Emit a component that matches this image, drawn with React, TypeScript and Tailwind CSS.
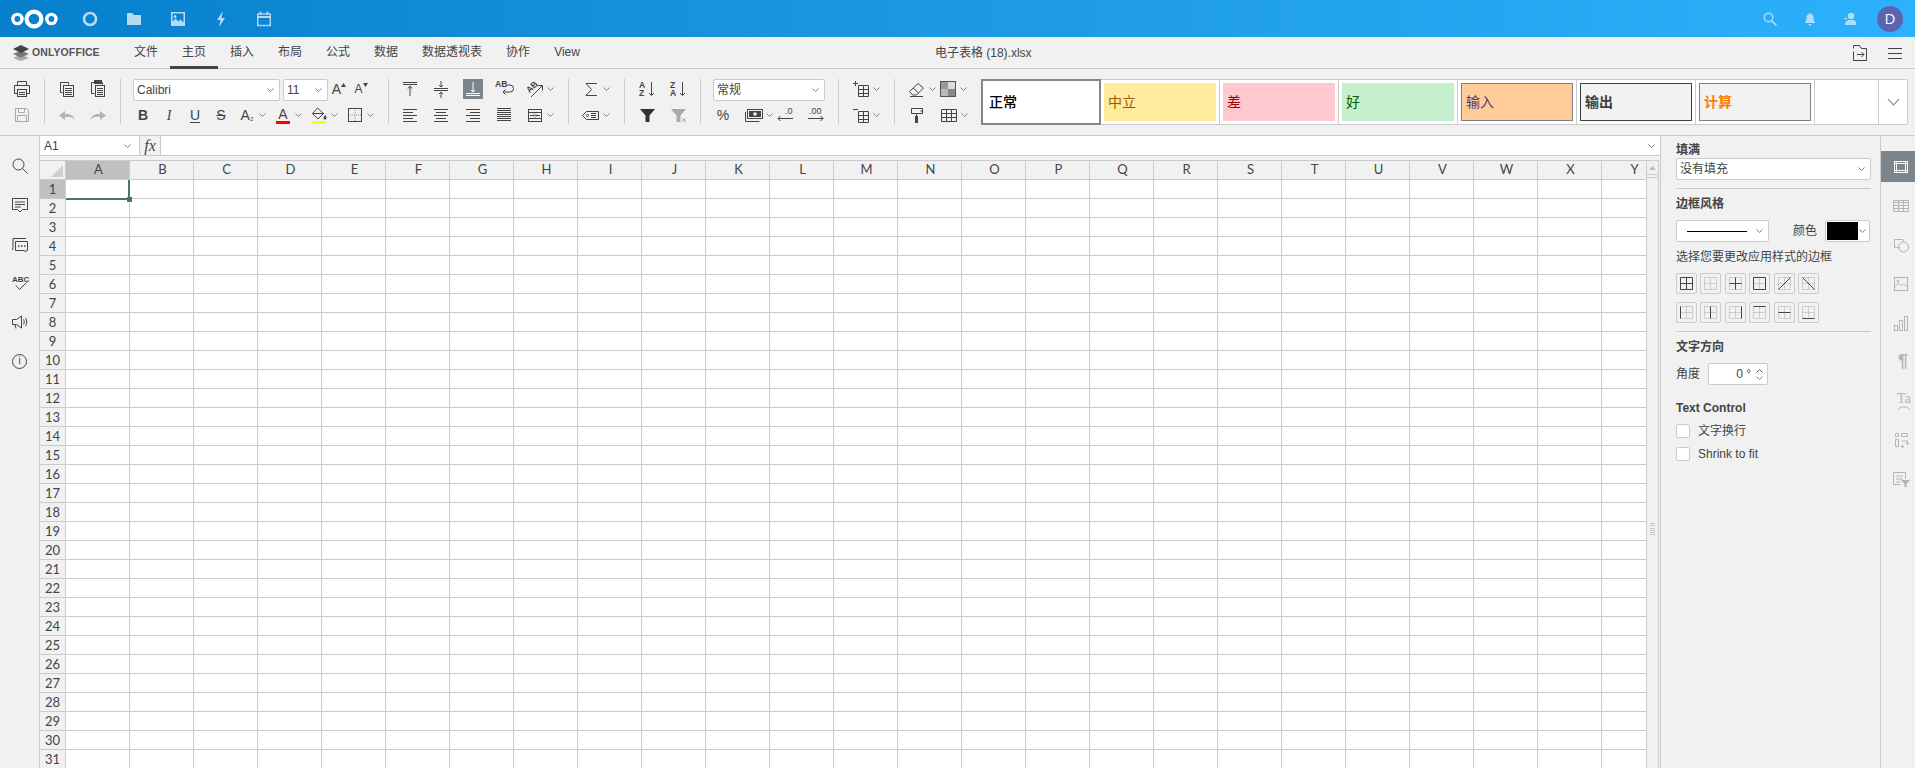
import React from 'react';

const COLUMNS = 'ABCDEFGHIJKLMNOPQRSTUVWXY'.split('');
const ROWS = Array.from({ length: 31 }, (_, i) => i + 1);

type IconProps = { children: React.ReactNode; size?: number; className?: string };

const Svg: React.FC<IconProps> = ({ children, size = 20, className }) => (
  <svg width={size} height={size} viewBox="0 0 20 20" fill="none" stroke="currentColor" strokeWidth="1" className={className}>
    {children}
  </svg>
);

const Chevron = () => (
  <svg width="7" height="4" viewBox="0 0 7 4" fill="none" stroke="#808080" strokeWidth="1" className="shrink-0">
    <path d="M.5.5 3.500 3.500 6.500.5" />
  </svg>
);

const Tool: React.FC<{ children?: React.ReactNode; className?: string }> = ({ children, className = '' }) => (
  <div className={`w-[20px] h-[20px] shrink-0 flex items-center justify-center ${className}`}>{children}</div>
);

const Split: React.FC<{ children?: React.ReactNode }> = ({ children }) => (
  <div className="w-[30px] h-[20px] shrink-0 flex items-center">
    <Tool>{children}</Tool>
    <div className="w-[10px] flex justify-center">
      <Chevron />
    </div>
  </div>
);

const Combo: React.FC<{ children?: React.ReactNode; className?: string }> = ({ children, className = '' }) => (
  <div className={`h-[22px] shrink-0 flex items-center justify-between bg-white border border-[#cbcbcb] rounded-[2px] pl-[3px] pr-[5px] ${className}`}>
    <span className="truncate">{children}</span>
    <Chevron />
  </div>
);

const Sep = () => <div className="w-px h-[45px] bg-[#cbcbcb] shrink-0" />;

const Row: React.FC<{ children?: React.ReactNode; className?: string }> = ({ children, className = '' }) => (
  <div className={`h-[20px] flex items-start ${className}`}>{children}</div>
);

function TopBar() {
  return (
    <header className="h-[37px] shrink-0 flex items-center bg-linear-to-r from-[#0680cc] to-[#2db1fc] pl-[11px] pr-[12px] text-white">
      <svg width="47" height="22" viewBox="0 0 47 22" fill="none" stroke="#fff">
        <circle cx="23" cy="11" r="7.400" strokeWidth="4.200" />
        <circle cx="6.400" cy="11" r="4.600" strokeWidth="3.400" />
        <circle cx="40.400" cy="11" r="4.600" strokeWidth="3.400" />
      </svg>
      <div className="flex ml-[10px] opacity-70">
        <div className="w-[44px] flex justify-center">
          <svg width="16" height="16" viewBox="0 0 16 16" fill="none" stroke="#fff" strokeWidth="2.600"><circle cx="8" cy="8" r="6" /></svg>
        </div>
        <div className="w-[44px] flex justify-center">
          <svg width="16" height="16" viewBox="0 0 16 16" fill="#fff"><path d="M1 2h5l2 2h7v10H1z" /></svg>
        </div>
        <div className="w-[43px] flex justify-center">
          <svg width="16" height="16" viewBox="0 0 16 16" fill="#fff"><path fillRule="evenodd" d="M1 1h14v14H1zm1.500 1.500v8l3-3 3 3 2-2 3 3v-9zM5 4a1.500 1.500 0 110 3 1.500 1.500 0 010-3z" /></svg>
        </div>
        <div className="w-[43px] flex justify-center">
          <svg width="16" height="16" viewBox="0 0 16 16" fill="#fff"><path d="M10 0 4 9h3.500L6 16l6-9H8.500z" /></svg>
        </div>
        <div className="w-[43px] flex justify-center">
          <svg width="16" height="16" viewBox="0 0 16 16" fill="none" stroke="#fff" strokeWidth="1.400"><rect x="1.700" y="3" width="12.600" height="11.500" /><path d="M1.700 6h12.600" strokeWidth="2" /><path d="M4.500.5v3M11.500.5v3" strokeWidth="1.800" /></svg>
        </div>
      </div>
      <div className="ml-auto flex items-center">
        <div className="w-[40px] flex justify-center opacity-60">
          <svg width="14" height="14" viewBox="0 0 14 14" fill="none" stroke="#fff" strokeWidth="1.400"><circle cx="5.500" cy="5.500" r="4.300" /><path d="m8.800 8.800 4.500 4.500" strokeWidth="1.800" /></svg>
        </div>
        <div className="w-[40px] flex justify-center opacity-60">
          <svg width="12" height="14" viewBox="0 0 12 14" fill="#fff"><path d="M6 1a1 1 0 011 1c2 .5 2.500 2 2.500 4 0 2 .5 3 1.500 4v1H1v-1c1-1 1.500-2 1.500-4 0-2 .5-3.500 2.500-4a1 1 0 011-1zM4.500 12h3a1.500 1.500 0 01-3 0z" /></svg>
        </div>
        <div className="w-[40px] flex justify-center opacity-60">
          <svg width="14" height="14" viewBox="0 0 14 14" fill="#fff"><circle cx="8" cy="4" r="3.300" /><path d="M2 13v-1.500c0-2 2-3 3.500-3.500h5c1.500.5 2.500 1.500 2.500 3V13z" /><rect x="1" y="6" width="3" height="1.200" /></svg>
        </div>
        <div className="w-[26px] h-[26px] rounded-full bg-[#5b64b0] flex items-center justify-center text-[15px] ml-[7px] font-['Open_Sans',sans-serif]">D</div>
      </div>
    </header>
  );
}

function MenuBar() {
  const tabs = ['文件', '主页', '插入', '布局', '公式', '数据', '数据透视表', '协作', 'View'];
  return (
    <div className="h-[32px] shrink-0 flex items-stretch border-b border-[#cbcbcb]">
      <div className="w-[122px] flex items-center pl-[12px]">
        <svg width="18" height="16" viewBox="0 0 18 16" className="shrink-0">
          <path d="M9 9.500 1 13l8 3 8-3z" fill="#aaa" />
          <path d="M9 5.500 1 9l8 3.500L17 9z" fill="#777" />
          <path d="M9 0 1 4l8 4 8-4z" fill="#444" />
        </svg>
        <span className="ml-[2px] text-[10.500px] font-bold tracking-[0.1px] whitespace-nowrap text-[#555]">ONLYOFFICE</span>
      </div>
      {tabs.map((t) => (
        <div key={t} className={`px-3 flex items-center pt-px border-b-[3px] -mb-px whitespace-nowrap ${t === '主页' ? 'border-[#444]' : 'border-transparent'}`}>
          {t}
        </div>
      ))}
      <div className="ml-[343px] flex items-center whitespace-nowrap">电子表格 (18).xlsx</div>
      <div className="ml-auto flex items-center pr-[5px]">
        <div className="w-[40px] flex justify-center">
          <svg width="18" height="18" viewBox="0 0 18 18" fill="none" stroke="#444"><path d="M2.500 4.500v-3h6l2 3h5v12h-13v-9" /><path d="M6 10.500h7M10.500 8l2.500 2.500-2.500 2.500" /></svg>
        </div>
        <div className="w-[30px] flex justify-center">
          <svg width="16" height="14" viewBox="0 0 16 14" stroke="#444"><path d="M1 2.500h14M1 7.500h14M1 12.500h14" /></svg>
        </div>
      </div>
    </div>
  );
}

const Mini: React.FC<{ children: React.ReactNode }> = ({ children }) => (
  <svg width="20" height="20" viewBox="0 0 20 20" fontFamily="Liberation Sans" fontWeight="700" fontSize="8.500" fill="#444" stroke="none">
    {children}
  </svg>
);

const ALIGN_LEFT = <path d="M3 4.500h14M3 7.500h10M3 10.500h14M3 13.500h10M3 16.500h14" />;
const ALIGN_CENTER = <path d="M3 4.500h14M5 7.500h10M3 10.500h14M5 13.500h10M3 16.500h14" />;
const ALIGN_RIGHT = <path d="M3 4.500h14M7 7.500h10M3 10.500h14M7 13.500h10M3 16.500h14" />;
const ALIGN_JUSTIFY = <path d="M3 3.500h14M3 5.500h14M3 7.500h14M3 9.500h14M3 11.500h14M3 13.500h14M3 15.500h14" />;

function GalleryItem({ label, fill, text, border, bold }: { label: string; fill: string; text: string; border: string; bold?: boolean }) {
  return (
    <div className="w-[119px] shrink-0 border-r border-[#cbcbcb] px-[3px] flex items-center">
      <div className={`w-[112px] h-[38px] flex items-center pl-[4px] text-[14px] ${fill} ${text} ${border} ${bold ? 'font-bold' : ''}`}>{label}</div>
    </div>
  );
}

function Toolbar() {
  return (
    <div className="h-[67px] shrink-0 flex items-start pt-[10px] border-b border-[#cbcbcb]">
      <div className="w-[44px] pl-[12px] flex flex-col gap-[6px] shrink-0">
        <Row>
          <Tool><Svg><path d="M5.500 6.500v-4h9v4M5.500 14.500h-3v-8h15v8h-3" /><rect x="5.500" y="10.500" width="9" height="7" /><path d="M7 13.500h6M7 15.500h6" /></Svg></Tool>
        </Row>
        <Row>
          <Tool><Svg className="text-[#aaa]"><path d="M3.500 3.500h11l2 2v11h-13z" /><path d="M6.500 3.500v4h6v-4M5.500 16.500v-6h9v6" /></Svg></Tool>
        </Row>
      </div>
      <Sep />
      <div className="w-[75px] pl-[12px] flex flex-col gap-[6px] shrink-0">
        <Row className="gap-[11px]">
          <Tool><Svg><path d="M5.500 13.500h-2v-10h8v2" /><rect x="6.500" y="6.500" width="10" height="11" /><path d="M8 9.500h7M8 11.500h7M8 13.500h7M8 15.500h7" strokeWidth="1" /></Svg></Tool>
          <Tool><Svg><path d="M6.500 14.500h-3v-11h3M13.500 3.500h1v2" /><rect x="6.500" y="1.500" width="7" height="3" fill="#444" /><rect x="7.500" y="6.500" width="9" height="11" /><path d="M9 9.500h6M9 11.500h6M9 13.500h6M9 15.500h6" /></Svg></Tool>
        </Row>
        <Row className="gap-[11px]">
          <Tool><svg width="20" height="20" viewBox="0 0 20 20" fill="#b4b4b4"><path d="M2 10.500 8 6v3c4-.5 8 1 10 5.500-3-2.500-6-3-10-2.500v3z" /></svg></Tool>
          <Tool><svg width="20" height="20" viewBox="0 0 20 20" fill="#b4b4b4"><path d="M18 10.500 12 6v3C8 8.500 4 10 2 14.500c3-2.500 6-3 10-2.500v3z" /></svg></Tool>
        </Row>
      </div>
      <Sep />
      <div className="w-[267px] pl-[12px] flex flex-col gap-[6px] shrink-0">
        <Row>
          <Combo className="w-[147px]">Calibri</Combo>
          <Combo className="w-[45px] ml-[3px]">11</Combo>
          <Tool className="ml-px">
            <span className="text-[14px] leading-none">A</span>
            <svg width="5" height="4" viewBox="0 0 5 4" className="mb-[8px]"><path d="M0 4 2.500 0 5 4z" fill="#444" /></svg>
          </Tool>
          <Tool className="ml-[2px]">
            <span className="text-[12px] leading-none">A</span>
            <svg width="5" height="4" viewBox="0 0 5 4" className="mb-[8px]"><path d="M0 0h5L2.500 4z" fill="#444" /></svg>
          </Tool>
        </Row>
        <Row className="gap-[6px]">
          <Tool><span className="text-[14px] font-bold">B</span></Tool>
          <Tool><span className="text-[14px] italic font-['Liberation_Serif',serif]">I</span></Tool>
          <Tool><span className="text-[14px] underline underline-offset-2">U</span></Tool>
          <Tool><span className="text-[14px] line-through">S</span></Tool>
          <Split><span className="text-[14px] whitespace-nowrap">A<span className="text-[9px]">₂</span></span></Split>
          <Split>
            <div className="flex flex-col items-center">
              <span className="text-[14px] leading-[14px]">A</span>
              <div className="w-[14px] h-[3px] bg-[#ff0000]" />
            </div>
          </Split>
          <Split>
            <div className="flex flex-col items-center">
              <svg width="16" height="14" viewBox="0 0 16 14" fill="none" stroke="#444"><path d="M6.500 1 1.500 6.500 7 12l5.500-5.500z" /><path d="M1.500 6.500h11" /><path d="M14 8c-1 1.500-1.500 2-1.500 3a1.500 1.500 0 003 0c0-1-.5-1.500-1.500-3z" fill="#444" stroke="none" /></svg>
              <div className="w-[14px] h-[3px] bg-[#ffff00]" />
            </div>
          </Split>
          <Split>
            <svg width="14" height="14" viewBox="0 0 14 14" fill="none" stroke="#444"><rect x=".5" y=".5" width="13" height="13" /><path d="M7 2v11M2 7h11" strokeDasharray="1 1" stroke="#999" /></svg>
          </Split>
        </Row>
      </div>
      <Sep />
      <div className="w-[179px] pl-[11px] flex flex-col gap-[6px] shrink-0">
        <Row className="gap-[11.300px]">
          <Tool><Svg><path d="M3 3.500h14M3 5.500h14M10 7v10M8 9.500 10 7l2 2.500" /></Svg></Tool>
          <Tool><Svg><path d="M3 9.500h14M3 11.500h14M10 2v6M8 6l2 2 2-2M10 13v6M8 15l2-2 2 2" /></Svg></Tool>
          <Tool className="bg-[#7d858c] text-white"><Svg><path d="M3 14.500h14M3 16.500h14M10 3v10M8 11l2 2 2-2" /></Svg></Tool>
          <Tool>
            <Mini>
              <text x="1" y="8">AB</text>
              <path d="M13 6h3a3.500 3.500 0 010 7H9M11.500 10.500 9 13l2.500 2.500" fill="none" stroke="#444" />
            </Mini>
          </Tool>
          <Split>
            <Mini>
              <text x="2" y="12" transform="rotate(-45 6 10)">AB</text>
              <path d="M6 18 17 7M12.500 6.500H17.500V11.500" fill="none" stroke="#444" />
            </Mini>
          </Split>
        </Row>
        <Row className="gap-[11.300px]">
          <Tool><Svg>{ALIGN_LEFT}</Svg></Tool>
          <Tool><Svg>{ALIGN_CENTER}</Svg></Tool>
          <Tool><Svg>{ALIGN_RIGHT}</Svg></Tool>
          <Tool><Svg>{ALIGN_JUSTIFY}</Svg></Tool>
          <Split>
            <Svg><rect x="3.500" y="4.500" width="13" height="12" /><path d="M3.500 7.500h13M3.500 13.500h13M10 7.500v1M10 12.500v1M5 10.500h3.500M11.500 10.500H15" /><path d="M8.500 9v3L10 10.500zM11.500 9v3L10 10.500z" fill="#444" stroke="none" /></Svg>
          </Split>
        </Row>
      </div>
      <Sep />
      <div className="w-[55px] pl-[12px] flex flex-col gap-[6px] shrink-0">
        <Row><Split><Svg><path d="M16 4.500H5l5.500 6-5.500 6h11" /></Svg></Split></Row>
        <Row>
          <Split>
            <Svg><path d="M1.500 10.500 5.500 6.500h12v8h-12z" /><circle cx="6.500" cy="10.500" r="1" /><path d="M10 8.500h5M10 10.500h5M10 12.500h5" /></Svg>
          </Split>
        </Row>
      </div>
      <Sep />
      <div className="w-[75px] pl-[13px] flex flex-col gap-[6px] shrink-0">
        <Row className="gap-[11px]">
          <Tool>
            <Mini>
              <text x="1" y="9">A</text>
              <text x="1" y="17">Z</text>
              <path d="M13.500 3v13.500M11 14l2.500 2.500L16 14" fill="none" stroke="#444" />
            </Mini>
          </Tool>
          <Tool>
            <Mini>
              <text x="1" y="9">Z</text>
              <text x="1" y="17">A</text>
              <path d="M13.500 3v13.500M11 14l2.500 2.500L16 14" fill="none" stroke="#444" />
            </Mini>
          </Tool>
        </Row>
        <Row className="gap-[11px]">
          <Tool><svg width="20" height="20" viewBox="0 0 20 20" fill="#333"><path d="M2 4h15l-5.500 6.500V17h-4v-6.500z" /></svg></Tool>
          <Tool><svg width="20" height="20" viewBox="0 0 20 20" fill="#aaa"><path d="M2 4h15l-5.500 6.500V17h-4v-6.500z" /><path d="m13 13 4 4m0-4-4 4" stroke="#aaa" /></svg></Tool>
        </Row>
      </div>
      <Sep />
      <div className="w-[137px] pl-[12px] flex flex-col gap-[6px] shrink-0">
        <Row><Combo className="w-[112px]">常规</Combo></Row>
        <Row>
          <Tool><span className="text-[14px]">%</span></Tool>
          <div className="ml-[11px]"><Split><Svg><path d="M1.500 7v9.500h14" /><rect x="3.500" y="4.500" width="15" height="9" /><rect x="5" y="6" width="12" height="6" fill="#444" stroke="none" /><circle cx="11" cy="9" r="1.800" fill="#f1f1f1" stroke="none" /></Svg></Split></div>
          <Tool className="ml-px">
            <Mini>
              <text x="10" y="9" fontWeight="400" fontSize="9">.0</text>
              <path d="M18 13.500H3M5.500 11 3 13.500 5.500 16" fill="none" stroke="#444" />
            </Mini>
          </Tool>
          <Tool className="ml-[11px]">
            <Mini>
              <text x="3" y="9" fontWeight="400" fontSize="9">.00</text>
              <path d="M2 13.500h15M14.500 11l2.500 2.500-2.500 2.500" fill="none" stroke="#444" />
            </Mini>
          </Tool>
        </Row>
      </div>
      <Sep />
      <div className="w-[55px] pl-[12px] flex flex-col gap-[6px] shrink-0">
        <Row><Split><Svg><path d="M2 4.500h5M4.500 2v5" /><path d="M7.500 6.500h10v11h-10zM7.500 10.500h10M7.500 14.500h10M12.500 6.500v11" /></Svg></Split></Row>
        <Row><Split><Svg><path d="M2 4.500h5" /><path d="M7.500 6.500h10v11h-10zM7.500 10.500h10M7.500 14.500h10M12.500 6.500v11" /></Svg></Split></Row>
      </div>
      <Sep />
      <div className="w-[86px] pl-[12px] flex flex-col gap-[6px] shrink-0">
        <Row className="gap-px">
          <Split><Svg><path d="M2.500 12.500 11 4.500l5.500 4.500-7 7h-4zM6 9l5.500 5M3 17.500h13" /></Svg></Split>
          <Split>
            <svg width="16" height="16" viewBox="0 0 16 16">
              <rect width="16" height="16" fill="#555" />
              <rect x="8" y="1" width="7" height="7" fill="#ddd" />
              <rect x="1" y="1" width="7" height="7" fill="#999" />
              <rect x="1" y="8" width="7" height="7" fill="#bbb" />
              <rect x="8" y="8" width="7" height="7" fill="#888" />
            </svg>
          </Split>
        </Row>
        <Row className="gap-px">
          <Tool><Svg><path d="M4.500 3.500h11v5h-11z" /><path d="M15.500 6h-2M9.500 8.500v3" /><rect x="8" y="11" width="3" height="7" fill="#444" stroke="none" /></Svg></Tool>
          <div className="w-[10px]" />
          <Split><Svg><path d="M2.500 4.500h15v12h-15zM2.500 8.500h15M2.500 12.500h15M7.500 4.500v12M12.500 4.500v12" /></Svg></Split>
        </Row>
      </div>
      <div className="w-[927px] h-[46px] shrink-0 flex bg-white border border-[#cbcbcb] rounded-[2px]">
        <div className="w-[120px] h-[46px] -mt-px -ml-px shrink-0 border-[2px] border-[#868686] flex items-center pl-[6px] text-[14px] text-black font-medium">正常</div>
        <GalleryItem label="中立" fill="bg-[#ffeb9c]" text="text-[#9c5700]" border="" />
        <GalleryItem label="差" fill="bg-[#ffc7ce]" text="text-[#9c0006]" border="" />
        <GalleryItem label="好" fill="bg-[#c6efce]" text="text-[#006100]" border="" />
        <GalleryItem label="输入" fill="bg-[#ffcc99]" text="text-[#3f3f76]" border="border border-[#7f7f7f]" />
        <GalleryItem label="输出" fill="bg-[#f2f2f2]" text="text-[#3f3f3f]" border="border border-[#3f3f3f]" bold />
        <GalleryItem label="计算" fill="bg-[#f2f2f2]" text="text-[#fa7d00]" border="border border-[#7f7f7f]" bold />
        <div className="w-[64px] shrink-0 border-r border-[#cbcbcb]" />
        <div className="flex-1 flex items-center justify-center">
          <svg width="13" height="8" viewBox="0 0 13 8" fill="none" stroke="#999" strokeWidth="1.200"><path d="m1 1 5.500 6L12 1" /></svg>
        </div>
      </div>
    </div>
  );
}

function LeftRail() {
  return (
    <aside className="w-[40px] shrink-0 border-r border-[#cbcbcb] flex flex-col items-center gap-[19px] pt-[20px]">
      <Tool><Svg><circle cx="8.500" cy="8.500" r="5.500" /><path d="m12.500 12.500 5 5" /></Svg></Tool>
      <Tool><Svg><path d="M2.500 3.500h15v11h-5l-2.500 2.500-2.500-2.500h-5z" /><path d="M5 7h10M5 9.500h10M5 12h6" /></Svg></Tool>
      <Tool><Svg><path d="M3 13V4.500h13M5.500 7.500h12v9h-1l-1 1.500-1-1.500h-9z M3 13l-.5 3" /><path d="M8 12h1.500M11 12h1.500M14 12h1.500" strokeWidth="1.600" /></Svg></Tool>
      <Tool>
        <Mini>
          <text x="2" y="9" fontSize="8">ABC</text>
          <path d="m6 12.500 3.500 4 7-7" fill="none" stroke="#444" />
        </Mini>
      </Tool>
      <Tool><Svg><path d="M2.500 7.500h4l5-3.500v12l-5-3.500h-4zM5 12.500l1 4" /><path d="M13.500 7.500c1 1.500 1 3.500 0 5M15.500 6c1.700 2.500 1.700 5.500 0 8" /></Svg></Tool>
      <Tool>
        <div className="w-[15px] h-[15px] rounded-full border border-[#444] flex items-center justify-center text-[10px] leading-none">i</div>
      </Tool>
    </aside>
  );
}

function Sheet() {
  return (
    <div className="relative flex-1 min-w-0 overflow-hidden border-t border-[#cbcbcb]">
      <div className="flex h-[19px] border-b border-[#cbcbcb] font-['Lato',sans-serif] text-[13px]">
        <div className="w-[26px] shrink-0 border-r border-[#cbcbcb] flex items-end justify-end pr-[2px] pb-[2px]">
          <svg width="12" height="12" viewBox="0 0 12 12"><path d="M12 0v12H0z" fill="#cfcfcf" /></svg>
        </div>
        {COLUMNS.map((c) => (
          <div key={c} className={`w-[64px] shrink-0 border-r border-[#cbcbcb] flex items-center justify-center pl-[2px] ${c === 'A' ? 'bg-[#c0c0c0]' : ''}`}>
            {c}
          </div>
        ))}
      </div>
      {ROWS.map((r) => (
        <div key={r} className="flex h-[19px] border-b border-[#cbcbcb]">
          <div className={`w-[26px] shrink-0 border-r border-[#cbcbcb] flex items-center justify-center pt-px font-['Lato',sans-serif] text-[13px] ${r === 1 ? 'bg-[#c0c0c0]' : ''}`}>
            {r}
          </div>
          {COLUMNS.map((c) => (
            <div key={c} className="w-[64px] shrink-0 border-r border-[#cbcbcb] bg-white" />
          ))}
        </div>
      ))}
      {/* A1 selection */}
      <div className="absolute left-[26px] top-[19px] w-[64px] h-[20px] border-r-2 border-b-2 border-[#49795d]" />
      <div className="absolute left-[87px] top-[36px] w-[5px] h-[5px] bg-[#49795d]" />
    </div>
  );
}

function ScrollBar() {
  return (
    <div className="w-[13px] shrink-0 mr-px border-x border-[#cbcbcb] border-t flex flex-col pt-[1px]">
      <div className="h-[13px] flex items-center justify-center border-b border-[#cbcbcb]">
        <svg width="7" height="4" viewBox="0 0 7 4"><path d="M0 4 3.500 0 7 4z" fill="#bbb" /></svg>
      </div>
      <div className="flex-1 mt-[2px] border-t border-[#cbcbcb] flex flex-col items-center gap-[1.300px] pt-[345px]">
        {[0, 1, 2, 3, 4, 5].map((i) => (
          <div key={i} className="w-[5px] h-px bg-[#c8c8c8]" />
        ))}
      </div>
    </div>
  );
}

function BorderBtn({ solid }: { solid: string }) {
  return (
    <div className="w-[21px] h-[21px] border border-[#cbcbcb] rounded-[2px] flex items-center justify-center">
      <svg width="13" height="13" viewBox="0 0 13 13" fill="none">
        <path d="M.5.500h12v12H.5zM6.500.5v12M.5 6.500h12" stroke="#aaa" strokeDasharray="1 1" />
        <path d={solid} stroke="#444" />
      </svg>
    </div>
  );
}

const Check: React.FC<{ label: string }> = ({ label }) => (
  <div className="flex items-center gap-[8px] h-[14px]">
    <div className="w-[14px] h-[14px] bg-white border border-[#cbcbcb] rounded-[2px]" />
    <span>{label}</span>
  </div>
);

function RightPanel() {
  const row1 = ['M.5.500h12v12H.5zM6.500.5v12M.5 6.500h12', '', 'M6.500.5v12M.5 6.500h12', 'M.5.500h12v12H.5z', 'M.5 12.500l12-12', 'M.5.500l12 12'];
  const row2 = ['M.5.500v12', 'M6.500.5v12', 'M12.500.5v12', 'M.5.500h12', 'M.5 6.500h12', 'M.5 12.500h12'];
  return (
    <aside className="w-[221px] shrink-0 border-x border-[#cbcbcb] pl-[15px] pr-[9px] pt-[7px] leading-[14px]">
      <div className="font-bold">填满</div>
      <Combo className="mt-px">没有填充</Combo>
      <div className="h-px bg-[#cbcbcb] mt-[8px]" />
      <div className="font-bold mt-[8px]">边框风格</div>
      <div className="flex items-center mt-[9px]">
        <div className="w-[93px] h-[22px] bg-white border border-[#cbcbcb] rounded-[2px] flex items-center justify-between pl-[10px] pr-[5px]">
          <div className="w-[60px] h-px bg-black" />
          <Chevron />
        </div>
        <span className="ml-[24px] w-[32px]">颜色</span>
        <div className="w-[45px] h-[22px] bg-white border border-[#cbcbcb] rounded-[2px] flex items-center pl-px pr-[3px] justify-between">
          <div className="w-[31px] h-[18px] bg-black" />
          <Chevron />
        </div>
      </div>
      <div className="mt-[8px] whitespace-nowrap">选择您要更改应用样式的边框</div>
      <div className="flex gap-[3.400px] mt-[9px]">
        {row1.map((s, i) => <BorderBtn key={i} solid={s} />)}
      </div>
      <div className="flex gap-[3.400px] mt-[8px]">
        {row2.map((s, i) => <BorderBtn key={i} solid={s} />)}
      </div>
      <div className="h-px bg-[#cbcbcb] mt-[8px]" />
      <div className="font-bold mt-[8px]">文字方向</div>
      <div className="flex items-center mt-[9px]">
        <span className="w-[32px]">角度</span>
        <div className="w-[60px] h-[22px] bg-white border border-[#cbcbcb] rounded-[2px] flex items-center justify-end pr-[4px]">
          <span className="mr-[5px]">0 °</span>
          <div className="flex flex-col gap-[3px]">
            <svg width="7" height="4" viewBox="0 0 7 4" fill="none" stroke="#555"><path d="M.5 3.500 3.500.5l3 3" /></svg>
            <Chevron />
          </div>
        </div>
      </div>
      <div className="font-bold mt-[16px]">Text Control</div>
      <div className="mt-[9px]"><Check label="文字换行" /></div>
      <div className="mt-[9px]"><Check label="Shrink to fit" /></div>
    </aside>
  );
}

function RightRail() {
  const tab = 'h-[31px] flex items-center justify-end pr-[4px] text-[#b4b4b4]';
  return (
    <aside className="flex-1 flex flex-col gap-[8px] pt-[15px]">
      <div className={`${tab} bg-[#7d858c] text-white`}><Svg><rect x="3.500" y="4.500" width="13" height="11" /><path d="M3.500 6.500h13M3.500 13.500h13M5.500 4.500v11M14.500 4.500v11" /></Svg></div>
      <div className={tab}><Svg><path d="M2.500 4.500h15v11h-15zM2.500 6.500h15M2.500 9.500h15M2.500 12.500h15M7.500 4.500v11M12.500 4.500v11" /></Svg></div>
      <div className={tab}><Svg><path d="M9 12.500H3.500v-8H12v2" /><circle cx="12.500" cy="12" r="5" /></Svg></div>
      <div className={tab}><Svg><rect x="3.500" y="3.500" width="13" height="13" /><path d="m3.500 13 4-4 3 3 2-2 4 3" /><circle cx="7" cy="7" r="1" /></Svg></div>
      <div className={tab}><Svg><rect x="3.500" y="12.500" width="3" height="5" /><rect x="8.500" y="7.500" width="3" height="10" /><rect x="13.500" y="3.500" width="3" height="14" /></Svg></div>
      <div className={`${tab} text-[18px] font-bold pr-[7px]`}>¶</div>
      <div className={`${tab} pr-[3px]`}>
        <div className="flex flex-col items-center leading-none">
          <span className="text-[14px] font-['Liberation_Serif',serif]">Ta</span>
          <svg width="14" height="4" viewBox="0 0 14 4" fill="none" stroke="currentColor"><path d="M1 3.500c3-3.500 9-3.500 12 0" /></svg>
        </div>
      </div>
      <div className={tab}><Svg><path d="M4.500 3.500h3v3h-3zM4.500 9.500h3v7h-3zM10.500 3.500h6v3h-6z" /><path d="M11 11h5.500v3M13 16.500h-2.500" /><path d="m15 13 1.500 1.500L18 13M12 15l-1.500 1.500L12 18" /></Svg></div>
      <div className={tab}><Svg><path d="M14.500 10V3.500h-12v12h7M5 7h7M5 10h7M5 13h4" /><path d="M10 11h9l-3.500 4v3h-2v-3z" fill="currentColor" stroke="none" /></Svg></div>
    </aside>
  );
}

const App: React.FC = () => {
  return (
    <div className="w-[1915px] h-[768px] overflow-hidden flex flex-col bg-[#f1f1f1] text-[#444] text-[12px] font-['Liberation_Sans','Noto_Sans_CJK_SC',sans-serif]">
      <TopBar />
      <MenuBar />
      <Toolbar />
      <main className="flex-1 min-h-0 flex">
        <LeftRail />
        <div className="w-[1620px] shrink-0 flex flex-col">
          <div className="h-[20px] shrink-0 flex bg-white border-b border-[#cbcbcb]">
            <div className="w-[100px] shrink-0 flex items-center justify-between pl-[4px] pr-[8px] border-r border-[#cbcbcb]">
              A1
              <Chevron />
            </div>
            <div className="w-[21px] shrink-0 bg-[#f1f1f1] border-r border-[#cbcbcb] flex items-center justify-center italic text-[16px] font-['Liberation_Serif',serif]">fx</div>
            <div className="flex-1 flex items-center justify-end pr-[5px]"><Chevron /></div>
          </div>
          <div className="flex-1 min-h-0 flex mt-[4px]">
            <Sheet />
            <ScrollBar />
          </div>
        </div>
        <RightPanel />
        <RightRail />
      </main>
    </div>
  );
};

export default App;
